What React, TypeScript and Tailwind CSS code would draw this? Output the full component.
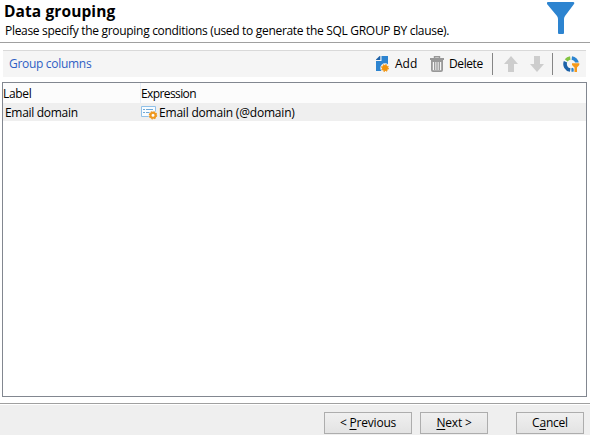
import type { ReactNode } from 'react';

function FunnelIcon() {
  return (
    <svg width="28" height="33" viewBox="0 0 28 33" fill="#2d84d0">
      <path d="M1 0H26Q28 0 27 2L18 14Q17 15.5 17 17V31Q17 32 16 32H12Q11 32 11 31V17Q11 15.5 10 14L0 2Q-.5 0 1 0Z" />
    </svg>
  );
}

function AddIcon() {
  return (
    <svg width="15" height="16" viewBox="0 0 15 16">
      <path d="M5.5 0H12V15H0V5H5.5Z" fill="#2d84d0" />
      <path d="M4.3 0V4H0V3.6L3.6 0Z" fill="#1e62a8" />
      <circle cx="9" cy="12" r="4.7" fill="#f5f5f5" />
      <circle cx="9" cy="12" r="3" fill="#f0930d" />
      <circle cx="9" cy="12" r="3.3" fill="none" stroke="#f0930d" strokeWidth="1.2" strokeDasharray="1.4 1.19" />
    </svg>
  );
}

function TrashIcon() {
  return (
    <svg width="14" height="16" viewBox="0 0 14 16" fill="none" stroke="#989898">
      <path d="M0 3H14" strokeWidth="2" />
      <path d="M4.5 2.5V.7H9.5V2.5" strokeWidth="1.4" />
      <path d="M1.9 5H12.1V14Q12.1 15.1 11 15.1H3Q1.9 15.1 1.9 14Z" strokeWidth="1.8" />
      <path d="M4.7 6V14M7 6V14M9.3 6V14" strokeWidth="1.3" />
    </svg>
  );
}

function ArrowIcon({ down = false }: { down?: boolean }) {
  return (
    <svg width="14" height="16" viewBox="0 0 14 16" fill="#cdcdcd">
      <path d={down ? 'M4 0H10V8H14L7 16L0 8H4Z' : 'M7 0L14 8H10V16H4V8H0Z'} />
    </svg>
  );
}

function RingFilterIcon() {
  return (
    <svg width="17" height="16" viewBox="0 0 17 16" fill="none" strokeWidth="3.6">
      <path d="M8.8 2A6 6 0 0 1 14 7.5" stroke="#2d84d0" />
      <path d="M3.2 4.4A6 6 0 0 1 7.3 2" stroke="#83c341" />
      <path d="M2.5 5.8A6 6 0 0 0 7.2 14" stroke="#1d62a8" />
      <path d="M8.4 14A6 6 0 0 0 11 13.3" stroke="#2d84d0" />
      <path d="M8.5 6.5H17V10L15 12V16H10.7V12L8.5 9.5Z" fill="#f5f5f5" />
      <path d="M9 7.3H16.3V9L14 11.6V16H11.5V11.6L9 9Z" fill="#f5991d" />
    </svg>
  );
}

function ExpressionIcon() {
  return (
    <svg width="17" height="14" viewBox="0 0 17 14" fill="none">
      <path d="M.5 .5H14.5V10.5H.5Z" fill="#f8fcff" stroke="#91c1e8" />
      <path d="M2 3.5H4M5 3.5H12M2 6.5H4M5 6.5H9" stroke="#6fa9d8" />
      <circle cx="12" cy="9.3" r="4.5" fill="#efefef" />
      <circle cx="12" cy="9.3" r="2.5" fill="#fff" stroke="#ee981d" strokeWidth="2" />
      <circle cx="12" cy="9.3" r="3.6" stroke="#ee981d" strokeWidth="1.2" strokeDasharray="1.6 1.23" />
    </svg>
  );
}

function DialogButton({ className, children }: { className: string; children: ReactNode }) {
  return (
    <button className={`h-[22px] shrink-0 border border-[#adadad] bg-linear-to-b from-[#f0f0f0] to-[#e3e3e3] text-center leading-[20px] tracking-[-0.2px] whitespace-nowrap ${className}`}>
      {children}
    </button>
  );
}

function Mnemonic({ children }: { children: ReactNode }) {
  return <span className="underline decoration-1 underline-offset-2">{children}</span>;
}

export default function App() {
  return (
    <div className="flex h-[435px] w-[590px] flex-col overflow-hidden bg-white font-['Open_Sans','Noto_Sans',sans-serif] text-[12px] leading-4 whitespace-nowrap text-black">
      <header className="flex h-[43px] shrink-0 justify-between border-b border-[#a0a0a0] pr-[15px] pl-[4px]">
        <div>
          <h1 className="h-[23px] text-[15.5px] leading-[23px] font-bold tracking-[0.1px]">Data grouping</h1>
          <p className="pl-px tracking-[-0.31px]">Please specify the grouping conditions (used to generate the SQL GROUP BY clause).</p>
        </div>
        <div className="pt-[2px]"><FunnelIcon /></div>
      </header>

      <div className="mt-[7px] mr-[4px] ml-[3px] flex h-[27px] shrink-0 items-center border-t border-[#d9d9d9] bg-[#f5f5f5]">
        <span className="w-[367px] pl-[6px] tracking-[-0.3px] text-[#2f5fc4]">Group columns</span>
        <span className="flex w-[60px] items-center pl-[6px]">
          <AddIcon /><span className="ml-[4px]">Add</span>
        </span>
        <span className="flex w-[62px] items-center">
          <TrashIcon /><span className="ml-[5px] tracking-[-0.4px]">Delete</span>
        </span>
        <span className="h-[22px] w-px bg-[#858585]" />
        <span className="ml-[11px]"><ArrowIcon /></span>
        <span className="ml-[12px]"><ArrowIcon down /></span>
        <span className="ml-[8px] h-[22px] w-px bg-[#858585]" />
        <span className="ml-[10px]"><RingFilterIcon /></span>
      </div>

      <div className="mt-[5px] mr-[3px] ml-[2px] h-[315px] shrink-0 border border-[#828790] bg-white">
        <div className="flex h-[20px] bg-[#fcfcfc] leading-[21px]">
          <span className="w-[138px] border-r border-[#e7eef7] tracking-[-0.3px]">Label</span>
          <span className="tracking-[-0.6px]">Expression</span>
        </div>
        <div className="flex h-[18px] items-center bg-[#efefef] pt-[2px]">
          <span className="w-[138px] pl-[2px] tracking-[-0.3px]">Email domain</span>
          <ExpressionIcon />
          <span className="ml-px tracking-[-0.2px]">Email domain (@domain)</span>
        </div>
      </div>

      <footer className="mt-[6px] flex h-[32px] shrink-0 border-t border-[#a0a0a0] bg-[#efefef]">
        <div className="flex w-full border-t border-white pt-[7px] pl-[324px]">
          <DialogButton className="w-[88px]">&lt; <Mnemonic>P</Mnemonic>revious</DialogButton>
          <DialogButton className="ml-[8px] w-[68px]"><Mnemonic>N</Mnemonic>ext &gt;</DialogButton>
          <DialogButton className="ml-[28px] w-[68px]">C<Mnemonic>a</Mnemonic>ncel</DialogButton>
        </div>
      </footer>
    </div>
  );
}
